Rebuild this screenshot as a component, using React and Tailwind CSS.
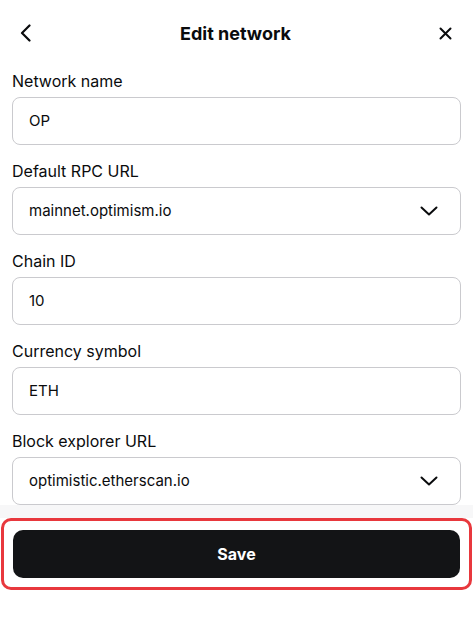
import React from "react";

function Chevron() {
  return (
    <svg width="18" height="10" viewBox="0 0 18 10" fill="none">
      <path d="M1.5 1.5 L9 8.5 L16.5 1.5" stroke="#0a0b0d" strokeWidth="2" strokeLinecap="round" strokeLinejoin="round" />
    </svg>
  );
}

function Field({ label, value, select }) {
  return (
    <div className="flex flex-col">
      <div className="text-[16px] leading-5 text-[#0a0b0d] mb-[6px]">{label}</div>
      <div className="h-[48px] rounded-[8px] border border-[#cacace] flex items-center justify-between pl-4 pr-[22px]">
        <span className="text-[15px] text-[#0a0b0d]">{value}</span>
        {select && <Chevron />}
      </div>
    </div>
  );
}

export default function App() {
  return (
    <div className="w-[473px] h-[617px] bg-white font-['Inter',sans-serif] text-[#0a0b0d]">
      <div className="h-[66px] flex items-center justify-between pl-5 pr-[21px]">
        <svg width="12" height="18" viewBox="0 0 12 18" fill="none">
          <path d="M9.5 1.5 L2 9 L9.5 16.5" stroke="#0a0b0d" strokeWidth="2.2" strokeLinecap="round" strokeLinejoin="round" />
        </svg>
        <div className="text-[18px] font-bold">Edit network</div>
        <svg width="13" height="13" viewBox="0 0 13 13" fill="none">
          <path d="M1.5 1.5 L11.5 11.5 M11.5 1.5 L1.5 11.5" stroke="#0a0b0d" strokeWidth="2" strokeLinecap="round" />
        </svg>
      </div>
      <div className="px-3 pt-[5px] flex flex-col gap-4">
        <Field label="Network name" value="OP" />
        <Field label="Default RPC URL" value="mainnet.optimism.io" select />
        <Field label="Chain ID" value="10" />
        <Field label="Currency symbol" value="ETH" />
        <Field label="Block explorer URL" value="optimistic.etherscan.io" select />
      </div>
      <div className="h-[13px] bg-[#f7f7f8]" />
      <div className="border-[3px] border-[#e8383d] rounded-[10px] px-[9px] py-[9px] mx-[1px]">
        <button className="w-full h-[48px] rounded-[10px] bg-[#131416] text-white text-[16px] font-bold">Save</button>
      </div>
    </div>
  );
}
